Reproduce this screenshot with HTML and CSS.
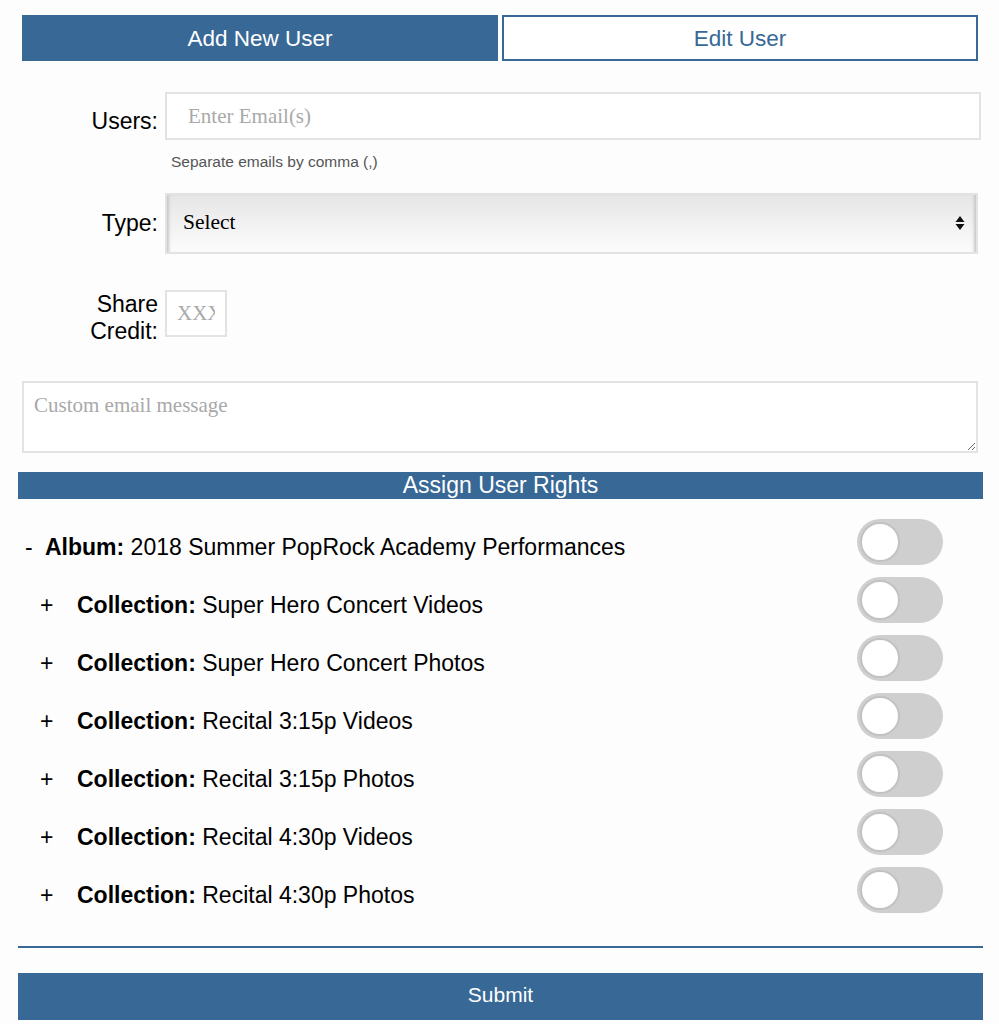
FILE: index.html
```html
<!DOCTYPE html>
<html lang="en">
<head>
    <meta charset="UTF-8">
    <meta name="viewport" content="width=device-width, initial-scale=1.0">
    <title>Add New User</title>
    <link rel="stylesheet" href="styles.css">
</head>
<body>
    <div class="page">
        <div class="tabs">
            <button class="tab active">Add New User</button>
            <button class="tab">Edit User</button>
        </div>

        <form class="user-form" onsubmit="event.preventDefault();">
            <div class="field">
                <label class="field-label users-label" for="users">Users:</label>
                <input type="text" id="users" class="text-input" placeholder="Enter Email(s)">
            </div>
            <div class="hint">Separate emails by comma (,)</div>

            <div class="field field-type">
                <label class="field-label" for="type">Type:</label>
                <div class="select-wrap">
                    <select id="type" class="select-input">
                        <option>Select</option>
                        <option>Viewer</option>
                        <option>Editor</option>
                    </select>
                    <svg class="select-arrows" width="10" height="16" viewBox="0 0 10 16">
                        <path d="M5 1 L9.5 7 H0.5 Z" fill="#111"/>
                        <path d="M5 15 L9.5 9 H0.5 Z" fill="#111"/>
                    </svg>
                </div>
            </div>

            <div class="field field-credit">
                <label class="field-label two-line" for="credit">Share<br>Credit:</label>
                <input type="text" id="credit" class="credit-input" placeholder="XXX">
            </div>

            <textarea class="message" placeholder="Custom email message"></textarea>

            <div class="section-bar">Assign User Rights</div>

            <div class="rights">
                <div class="right-row">
                    <span class="tree-toggle album-toggle">-</span>
                    <span class="right-name"><b>Album:</b> 2018 Summer PopRock Academy Performances</span>
                    <label class="switch"><input type="checkbox"><span class="knob"></span></label>
                </div>
                <div class="right-row child">
                    <span class="tree-toggle">+</span>
                    <span class="right-name"><b>Collection:</b> Super Hero Concert Videos</span>
                    <label class="switch"><input type="checkbox"><span class="knob"></span></label>
                </div>
                <div class="right-row child">
                    <span class="tree-toggle">+</span>
                    <span class="right-name"><b>Collection:</b> Super Hero Concert Photos</span>
                    <label class="switch"><input type="checkbox"><span class="knob"></span></label>
                </div>
                <div class="right-row child">
                    <span class="tree-toggle">+</span>
                    <span class="right-name"><b>Collection:</b> Recital 3:15p Videos</span>
                    <label class="switch"><input type="checkbox"><span class="knob"></span></label>
                </div>
                <div class="right-row child">
                    <span class="tree-toggle">+</span>
                    <span class="right-name"><b>Collection:</b> Recital 3:15p Photos</span>
                    <label class="switch"><input type="checkbox"><span class="knob"></span></label>
                </div>
                <div class="right-row child">
                    <span class="tree-toggle">+</span>
                    <span class="right-name"><b>Collection:</b> Recital 4:30p Videos</span>
                    <label class="switch"><input type="checkbox"><span class="knob"></span></label>
                </div>
                <div class="right-row child">
                    <span class="tree-toggle">+</span>
                    <span class="right-name"><b>Collection:</b> Recital 4:30p Photos</span>
                    <label class="switch"><input type="checkbox"><span class="knob"></span></label>
                </div>
            </div>

            <hr class="divider">

            <button type="submit" class="submit">Submit</button>
        </form>
    </div>
</body>
</html>
```

FILE: styles.css
```css
body {
    margin: 0;
    background: #fdfdfd;
    font-family: "Liberation Sans", Arial, sans-serif;
    color: #000;
}

.page {
    width: 965px;
    margin-left: 18px;
    padding-top: 15px;
}

/* tabs */
.tabs {
    display: flex;
    gap: 4px;
    margin: 0 5px 0 4px;
}
.tab {
    flex: 1;
    height: 46px;
    padding-top: 2px;
    font-family: "Liberation Sans", Arial, sans-serif;
    font-size: 22.5px;
    color: #386896;
    background: #fff;
    border: 2px solid #386896;
    cursor: pointer;
}
.tab.active {
    background: #386896;
    color: #fff;
}

/* fields */
.field {
    display: flex;
    align-items: center;
    gap: 7px;
    margin-top: 31px;
}
.field-label {
    width: 136px;
    text-align: right;
    font-size: 23px;
    padding-left: 4px;
}
.users-label {
    padding-top: 10px;
}
.text-input {
    flex: 1;
    box-sizing: border-box;
    height: 48px;
    margin-right: 2px;
    border: 2px solid #e3e3e3;
    background: #fff;
    padding: 0 21px;
    font-family: "Liberation Serif", "Times New Roman", serif;
    font-size: 21px;
    outline: none;
}
.text-input::placeholder,
.credit-input::placeholder,
.message::placeholder {
    color: #a9a9a9;
}
.hint {
    margin: 13px 0 0 153px;
    font-size: 15.5px;
    color: #555;
}

.field-type {
    margin-top: 22px;
}
.select-wrap {
    flex: 1;
    position: relative;
    height: 61px;
    margin-right: 5px;
}
.select-input {
    -webkit-appearance: none;
    appearance: none;
    display: block;
    width: 100%;
    height: 61px;
    box-sizing: border-box;
    border: 2px solid #e3e3e3;
    border-radius: 0;
    padding: 0 16px 3px;
    font-family: "Liberation Serif", "Times New Roman", serif;
    font-size: 21.5px;
    color: #000;
    background: linear-gradient(#e6e6e6, #f2f2f2 55%, #fcfcfc);
    box-shadow: inset 4px 0 3px -2px #c8c8c8, inset -4px 0 3px -2px #c8c8c8;
    outline: none;
}
.select-arrows {
    position: absolute;
    right: 13px;
    top: 22px;
    pointer-events: none;
}

.field-credit {
    align-items: flex-start;
    margin-top: 36px;
}
.two-line {
    line-height: 27px;
    margin-top: 1px;
}
.credit-input {
    width: 62px;
    height: 47px;
    box-sizing: border-box;
    border: 2px solid #e3e3e3;
    background: #fff;
    padding: 0 10px;
    font-family: "Liberation Serif", "Times New Roman", serif;
    font-size: 21px;
    outline: none;
}

.message {
    display: block;
    box-sizing: border-box;
    width: 956px;
    height: 72px;
    margin: 36px 0 0 4px;
    border: 2px solid #e3e3e3;
    background: #fff;
    padding: 10px 10px;
    font-family: "Liberation Serif", "Times New Roman", serif;
    font-size: 21px;
    outline: none;
}

/* rights */
.section-bar {
    margin-top: 19px;
    height: 27px;
    line-height: 27px;
    background: #386896;
    color: #fff;
    text-align: center;
    font-size: 23px;
}
.rights {
    padding-top: 14px;
}
.right-row {
    display: flex;
    align-items: center;
    height: 58px;
    font-size: 23px;
}
.tree-toggle,
.right-name {
    padding-top: 11px;
}
.tree-toggle {
    width: 27px;
    padding-left: 6px;
    box-sizing: border-box;
}
.album-toggle {
    padding-left: 7px;
}
.child .tree-toggle {
    width: 59px;
    padding-left: 22px;
}
.right-name {
    flex: 1;
}
.switch {
    position: relative;
    width: 86px;
    height: 46px;
    margin-right: 40px;
    border-radius: 23px;
    background: #cfcfcf;
    cursor: pointer;
}
.switch input {
    display: none;
}
.knob {
    position: absolute;
    left: 3px;
    top: 3px;
    width: 40px;
    height: 40px;
    box-sizing: border-box;
    border-radius: 50%;
    background: #fff;
    border: 2px solid #c2c2c2;
}

.divider {
    margin: 27px 0 0;
    border: 0;
    border-top: 2px solid #386896;
}

.submit {
    display: block;
    width: 100%;
    height: 47px;
    margin-top: 25px;
    padding-bottom: 4px;
    border: 0;
    background: #386896;
    color: #fff;
    font-family: "Liberation Sans", Arial, sans-serif;
    font-size: 21px;
    cursor: pointer;
}
```
